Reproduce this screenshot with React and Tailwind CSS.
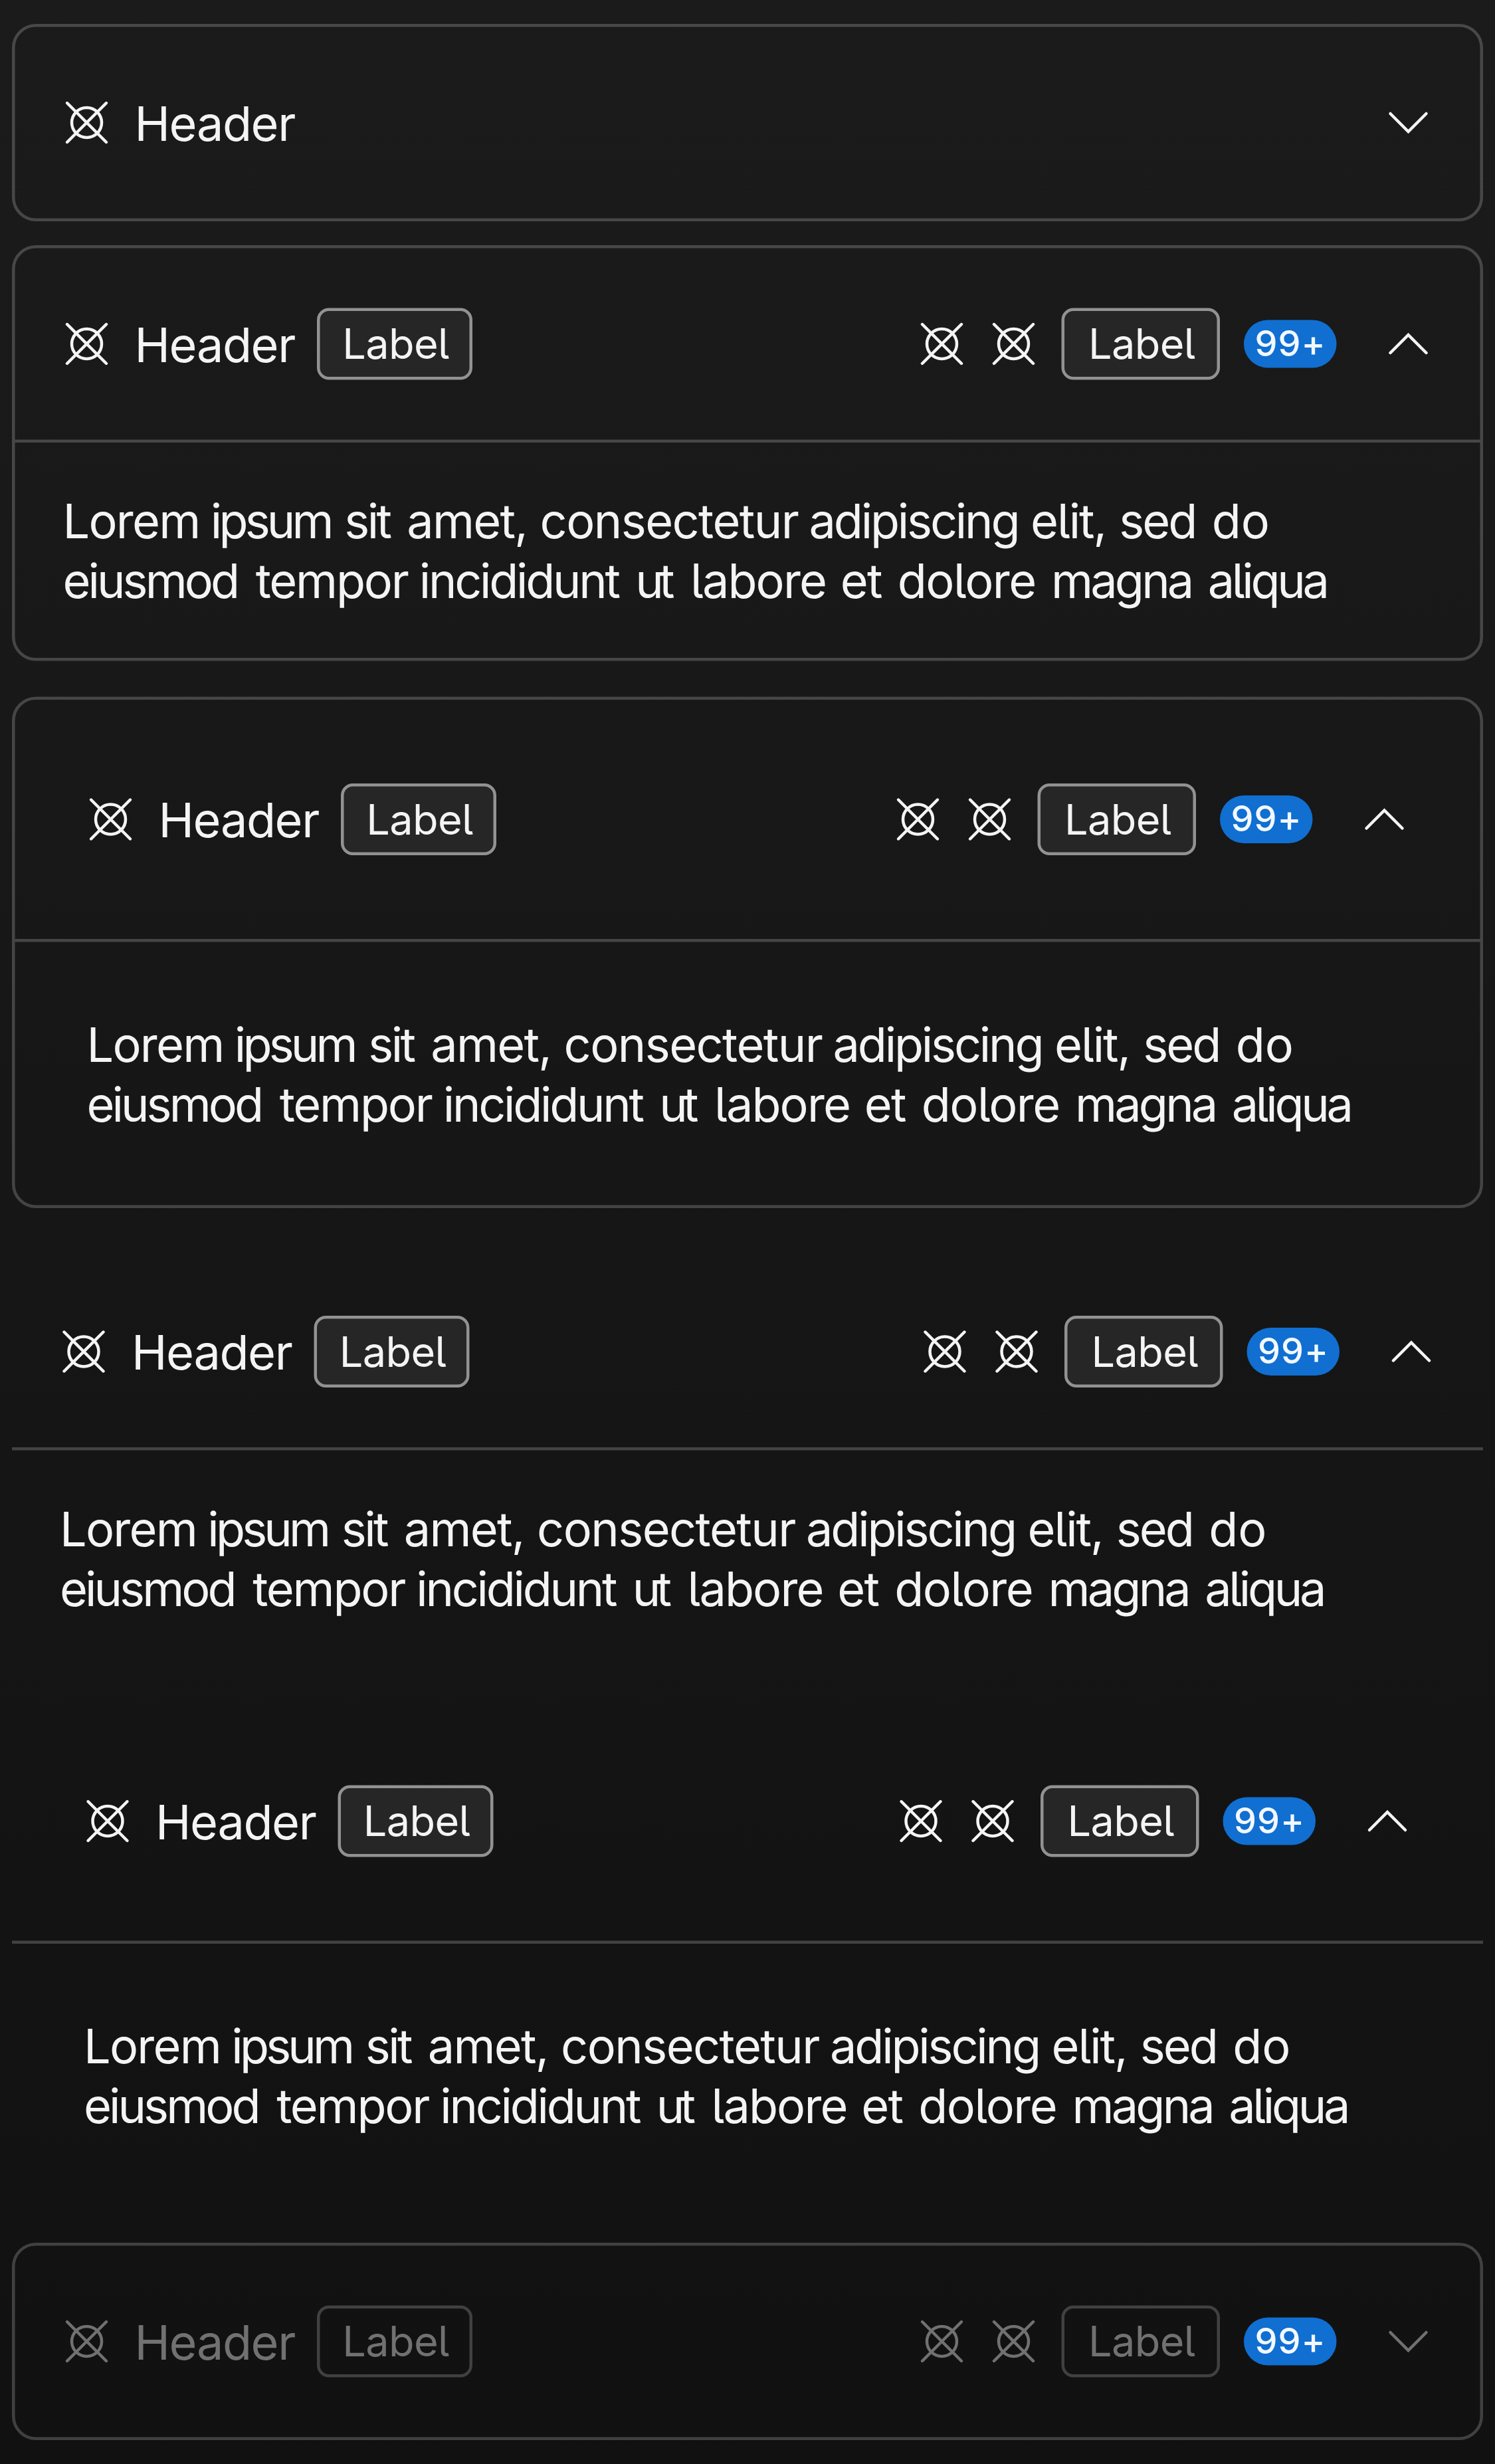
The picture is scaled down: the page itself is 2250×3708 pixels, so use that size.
const LINES = [
  [
    ["Lorem", "w-[49.4px] tracking-[-0.39px]"],
    ["ipsum", "w-[44.8px] tracking-[-1.07px]"],
    ["sit", "w-[20.9px] tracking-[-0.8px]"],
    ["amet,", "w-[44.5px] tracking-[-0.4px]"],
    ["consectetur", "w-[90px] tracking-[-0.35px]"],
    ["adipiscing", "w-[74.1px] tracking-[-0.71px]"],
    ["elit,", "w-[29.6px] tracking-[-0.46px]"],
    ["sed", "w-[31px] tracking-[-0.65px]"],
    ["do", ""],
  ],
  [
    ["eiusmod", "w-[64.5px] tracking-[-0.88px]"],
    ["tempor", "w-[54.7px] tracking-[-0.5px]"],
    ["incididunt", "w-[72.3px] tracking-[-0.73px]"],
    ["ut", "w-[18.4px] tracking-[-1.5px]"],
    ["labore", "w-[50.2px] tracking-[-0.42px]"],
    ["et", "w-[19.1px] tracking-[-0.4px]"],
    ["dolore", "w-[51.4px] tracking-[-0.34px]"],
    ["magna", "w-[52.4px] tracking-[-0.85px]"],
    ["aliqua", "tracking-[-0.96px]"],
  ],
];

function PlaceholderIcon() {
  return (
    <svg className="size-4 shrink-0" viewBox="0 0 16 16" fill="none" stroke="currentColor" strokeLinecap="round">
      <circle cx="8" cy="8" r="5" />
      <path d="M1.45 1.45 14.55 14.55M14.55 1.45 1.45 14.55" />
    </svg>
  );
}

function Chevron({ up }) {
  return (
    <svg className="size-4 shrink-0" viewBox="0 0 16 16" fill="none" stroke="currentColor" strokeLinecap="round">
      <path d={up ? "M2 11 8 5 14 11" : "M2 5 8 11 14 5"} />
    </svg>
  );
}

function LabelButton({ className, disabled }) {
  return (
    <span
      className={`flex h-6 shrink-0 items-center rounded border pb-[2px] text-[14px] tracking-[-0.14px] ${
        disabled ? "border-white/20" : "border-[#929292] bg-[#262626]"
      } ${className}`}
    >
      Label
    </span>
  );
}

function Badge() {
  return (
    <span className="flex h-4 w-[31px] shrink-0 items-center rounded-full bg-[#106fd1] pl-[3.7px] text-[12px] font-medium tracking-[0.2px] text-[#f3f8ff]">
      99+
    </span>
  );
}

function Body({ large }) {
  return (
    <p className={`border-t border-white/20 leading-5 text-[#f4f4f4] ${large ? "p-6" : "p-4"}`}>
      {LINES.map((words, i) => (
        <span key={i} className="flex whitespace-pre">
          {words.map(([word, className]) => (
            <span key={word} className={`shrink-0 ${className}`}>
              {word + " "}
            </span>
          ))}
        </span>
      ))}
    </p>
  );
}

function Accordion({ simple, open, large, borderless, disabled, className }) {
  return (
    <section className={`${borderless ? "" : "rounded-lg border border-white/20"} ${className}`}>
      <header
        className={`flex items-center gap-2 ${large ? "h-20 px-6" : "h-16 px-4"} ${
          disabled ? "text-[#717171]" : "text-[#f4f4f4]"
        }`}
      >
        <PlaceholderIcon />
        <span className="w-[53px] shrink-0 leading-5 tracking-[-0.31px]">Header</span>
        {!simple && <LabelButton className="w-[52px] pl-[7.5px]" disabled={disabled} />}
        <div className="ml-auto flex items-center gap-2">
          {!simple && (
            <>
              <PlaceholderIcon />
              <PlaceholderIcon />
              <LabelButton className="w-[53px] pl-[8px]" disabled={disabled} />
              <Badge />
            </>
          )}
          <span className="ml-2">
            <Chevron up={open} />
          </span>
        </div>
      </header>
      {open && <Body large={large} />}
    </section>
  );
}

export default function App() {
  return (
    <div className="h-[3708px] w-[2250px] overflow-hidden bg-[linear-gradient(#1b1b1b,#111111)]">
      <main className="flex w-[500px] origin-top-left scale-[4.5] flex-col px-1 py-2 font-['Inter',sans-serif] text-[16px] [font-feature-settings:'cv05']">
        <Accordion simple />
        <Accordion open className="mt-2" />
        <Accordion open large className="mt-3" />
        <Accordion open borderless className="mt-4" />
        <Accordion open large borderless className="mt-3" />
        <Accordion disabled className="mt-3" />
      </main>
    </div>
  );
}
